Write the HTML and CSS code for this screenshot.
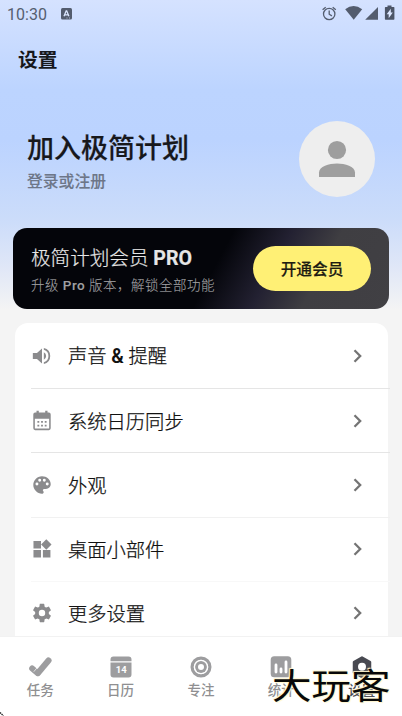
FILE: index.html
```html
<!DOCTYPE html>
<html lang="zh-CN">
<head>
<meta charset="utf-8">
<title>设置</title>
<link rel="stylesheet" href="styles.css">
</head>
<body>
<div class="screen">
  <header class="status">
    <span class="time">10:30</span>
    <svg class="ime" width="11" height="12" viewBox="0 0 11 12"><rect width="11" height="11.5" rx="1.5" fill="#535c6e"/><path d="M3 8.3 5.2 2.8h.5L7.9 8.3M3.8 6.8h3.3" fill="none" stroke="#dce7ff" stroke-width="1.3"/><path d="M5.5 10h1M8 10h1" stroke="#dce7ff" stroke-width=".7"/></svg>
    <svg class="signals" width="76" height="18" viewBox="0 0 76 18">
      <g fill="none" stroke="#555e70" stroke-width="1.3"><circle cx="8.2" cy="10" r="5.7"/><path d="M8.2 6.5v3.7l2.7 1.7M1.6 5.8 4.7 3.2M14.8 5.8 11.7 3.2"/></g>
      <path d="M24.2 5.2Q32.5-1 41.2 5.2L32.7 15.8z" fill="#535c6e"/>
      <path d="M57 3v12.8H44.2z" fill="#535c6e"/>
      <path d="M66.500 1.400h4v1.500h2.200q.7 0 .7.7v11.500q0 .7-.7.7h-8.100q-.7 0-.7-.7V3.600q0-.7.7-.7h1.900z" fill="#4c5567"/><path d="M69.800 4.800v3.800h2L67.700 14.200v-4h-2z" fill="#dce7ff"/>
    </svg>
  </header>
  <h1 class="title">设置</h1>
  <section class="profile">
    <div>
      <div class="name">加入极简计划</div>
      <div class="login">登录或注册</div>
    </div>
    <svg class="avatar" width="76" height="76" viewBox="0 0 76 76"><circle cx="38" cy="38" r="38" fill="#eee"/><circle cx="38" cy="29" r="9.100" fill="#9e9e9e"/><path d="M20 56v-4.500C20 45.500 30 42.500 38 42.500s18 3 18 9V56z" fill="#9e9e9e"/></svg>
  </section>
  <section class="member">
    <div>
      <div class="plan">极简计划会员 <b>PRO</b></div>
      <div class="desc">升级 <span>Pro</span> 版本，解锁全部功能</div>
    </div>
    <button class="open">开通会员</button>
  </section>
  <main class="list">
    <div class="row"><svg class="icon" viewBox="0 0 24 24"><path d="M2 8.800v6.400h4.500l5.500 5V3.800l-5.500 5H2zm14.500 3.200A4.500 4.500 0 0 0 14 7.970v8.050A4.470 4.470 0 0 0 16.500 12zM14 3.230v2.060a7 7 0 0 1 0 13.420v2.060a9 9 0 0 0 0-17.540z"/></svg><span class="label">声音 <b>&amp;</b> 提醒</span><svg class="arrow" viewBox="0 0 10 14"><path d="M1.500 1.300 7.200 7 1.500 12.700"/></svg></div>
    <div class="row"><svg class="icon" viewBox="0 0 24 24"><path fill-rule="evenodd" d="M19.500 2.800H18V.8h-2.500v2h-7v-2H6v2H4.500a2 2 0 0 0-2 2V20a2 2 0 0 0 2 2h15a2 2 0 0 0 2-2V4.800a2 2 0 0 0-2-2zM19.800 20.300H4.200V9.500h15.600zM7 12h2v2H7zm4 0h2v2h-2zm4 0h2v2h-2zm-8 4h2v2H7zm4 0h2v2h-2zm4 0h2v2h-2z"/></svg><span class="label">系统日历同步</span><svg class="arrow" viewBox="0 0 10 14"><path d="M1.500 1.300 7.200 7 1.500 12.700"/></svg></div>
    <div class="row"><svg class="icon" viewBox="0 0 24 24"><path d="M12 2.500C6.500 2.500 2.500 7 2.500 12s4.500 9.500 9.500 9.500c1 0 1.800-.7 1.800-1.700 0-.5-.2-.9-.5-1.200-.9-1-.1-2.300 1-2.300h2c3 0 5.200-2.400 5.200-5.300 0-4.700-4.300-8.500-9.500-8.500zM6.500 12.500a1.600 1.600 0 1 1 0-3.200 1.600 1.600 0 0 1 0 3.200zm3-4a1.600 1.600 0 1 1 0-3.200 1.600 1.600 0 0 1 0 3.200zm5 0a1.600 1.600 0 1 1 0-3.200 1.600 1.600 0 0 1 0 3.200zm3.200 4a1.600 1.600 0 1 1 0-3.200 1.600 1.600 0 0 1 0 3.200z"/></svg><span class="label">外观</span><svg class="arrow" viewBox="0 0 10 14"><path d="M1.500 1.300 7.200 7 1.500 12.700"/></svg></div>
    <div class="row"><svg class="icon" viewBox="0 0 24 24"><path d="M2.700 3.200h8.200v8.200H2.700zM2.700 13.200h8.200v8.200H2.700zM13 13.200h8.200v8.200H13zM16.700 1.400l5.700 5.700-5.700 5.700-5.700-5.700z"/></svg><span class="label">桌面小部件</span><svg class="arrow" viewBox="0 0 10 14"><path d="M1.500 1.300 7.200 7 1.500 12.700"/></svg></div>
    <div class="row"><svg class="icon" viewBox="0 0 24 24"><path d="M19.430 12.980c.04-.32.070-.64.070-.98s-.03-.66-.07-.98l2.110-1.650c.19-.15.240-.42.120-.64l-2-3.460c-.12-.22-.39-.3-.61-.22l-2.490 1c-.52-.4-1.080-.73-1.690-.98l-.38-2.650A.488.488 0 0 0 14 2h-4c-.25 0-.46.180-.49.420l-.38 2.650c-.61.250-1.170.59-1.690.98l-2.490-1c-.23-.09-.49 0-.61.220l-2 3.460c-.13.220-.07.490.12.640l2.110 1.650c-.04.320-.07.650-.07.980s.03.660.07.980l-2.110 1.650c-.19.150-.24.420-.12.640l2 3.460c.12.220.39.300.61.220l2.490-1c.52.400 1.080.730 1.690.980l.38 2.650c.03.240.24.420.49.420h4c.25 0 .46-.18.49-.42l.38-2.650c.61-.25 1.170-.59 1.690-.98l2.490 1c.23.090.49 0 .61-.22l2-3.460c.12-.22.070-.49-.12-.64zM12 15.500a3.500 3.500 0 1 1 0-7 3.500 3.500 0 0 1 0 7z"/></svg><span class="label">更多设置</span><svg class="arrow" viewBox="0 0 10 14"><path d="M1.500 1.300 7.200 7 1.500 12.700"/></svg></div>
  </main>
  <nav class="tabs">
    <div class="tab"><svg width="24" height="22" viewBox="0 0 24 22"><path d="M10 17 20.500 4.500" stroke="#9d9d9f" stroke-width="6" stroke-linecap="round"/><path d="M4.200 12.500 9.500 17" stroke="#9d9d9f" stroke-width="6" stroke-linecap="round"/><path d="M5.800 15.700 9.700 11" stroke="#fff" stroke-width=".7"/></svg><span>任务</span></div>
    <div class="tab"><svg width="24" height="22" viewBox="0 0 24 22"><path d="M1.500 5.300V3.500Q1.500.5 4.500.5h15q3 0 3 3v1.800zM1.500 6.600h21v11.900q0 3-3 3h-15q-3 0-3-3z" fill="#9d9d9f"/><text x="12.200" y="17" text-anchor="middle" class="date">14</text></svg><span>日历</span></div>
    <div class="tab"><svg width="24" height="22" viewBox="0 0 24 22"><circle cx="12" cy="11" r="8.900" fill="none" stroke="#9d9d9f" stroke-width="3.200"/><circle cx="12" cy="11" r="5.900" fill="#9d9d9f"/><circle cx="12" cy="11" r="6.700" fill="none" stroke="#fff" stroke-width=".7"/><circle cx="12" cy="11" r="3" fill="#fff"/></svg><span>专注</span></div>
    <div class="tab"><svg width="24" height="22" viewBox="0 0 24 22"><rect x="1.700" y=".3" width="20.600" height="21" rx="3.500" fill="#9d9d9f"/><path d="M7 9v7M12 13v3M17 6v10" stroke="#fff" stroke-width="2.800" stroke-linecap="round"/></svg><span>统计</span></div>
    <div class="tab current"><svg width="24" height="22" viewBox="0 0 24 22"><path d="M12 1.500 20 6v10.500L12 21 4 16.500V6z" fill="#484951" stroke="#484951" stroke-width="2.500" stroke-linejoin="round"/><circle cx="12" cy="10.800" r="4" fill="#fff"/></svg><span>设置</span></div>
  </nav>
  <svg class="corner" width="5" height="5" viewBox="0 0 5 5"><path d="M0 1.500 3.500 5" stroke="#222" stroke-width="1.300" stroke-dasharray="1.500 .7"/></svg>
  <div class="watermark">大玩客</div>
</div>
</body>
</html>
```

FILE: styles.css
```css
* { box-sizing: border-box; }
body { margin: 0; }
.screen {
  position: relative;
  display: flex;
  flex-direction: column;
  width: 402px;
  height: 716px;
  overflow: hidden;
  background: linear-gradient(#d5e2ff 0, #bcd4ff 90px, #bbd3ff 140px, #cbdcfa 218px, #e0e7f7 268px, #f4f4f4 310px);
  font-family: Roboto, "Noto Sans CJK SC", sans-serif;
  color: #17181c;
}
.status { display: flex; align-items: center; height: 28px; padding: 0 5px 0 7px; flex: none; }
.time { font-size: 16px; letter-spacing: .05px; color: #555e70; width: 54px; }
.signals { margin-left: auto; margin-top: -2px; }
.title { margin: 18px 0 0 18px; height: 30px; font-size: 19.800px; line-height: 30px; font-weight: 700; }
.profile { display: flex; justify-content: space-between; height: 76px; margin: 45px 27px 0; }
.name { margin-top: 9px; font-size: 27px; line-height: 38px; font-weight: 500; -webkit-text-stroke: .2px; }
.login { margin-top: 2px; font-size: 15.800px; line-height: 24px; font-weight: 500; color: #6d7688; -webkit-text-stroke: .1px; }
.member {
  display: flex;
  align-items: center;
  justify-content: space-between;
  flex: none;
  height: 81px;
  margin: 31px 13px 0;
  padding: 0 18px;
  border-radius: 14px;
  background: linear-gradient(118deg, #04050a 0, #04050a 53%, #232132 67%, #3f3e42 79%, #414044 100%);
}
.plan { margin-top: 3px; font-size: 19.600px; line-height: 29px; font-weight: 300; color: #e6e6e6; white-space: nowrap; -webkit-text-stroke: .2px; }
.plan b { font-weight: 700; }
.desc { margin-top: 1px; font-size: 13.500px; line-height: 22px; letter-spacing: .5px; font-weight: 300; color: #a0a0a2; white-space: nowrap; -webkit-text-stroke: .1px; }
.desc span { font-weight: 500; }
.open { width: 118px; height: 45px; padding: 2px 0 0; border: 0; border-radius: 23px; background: #fff075; color: #1d1c12; font: 500 15.700px/43px Roboto, "Noto Sans CJK SC", sans-serif; -webkit-text-stroke: .2px; }
.list { flex: none; width: 373px; height: 313px; margin: 14px 0 0 15px; border-radius: 13px 13px 0 0; background: #fff; }
.row { display: flex; align-items: center; height: 64.300px; margin-left: 16px; width: 359px; border-bottom: 1px solid #e5e5e5; }
.row:first-child { height: 66px; }
.row:nth-child(3) { border-color: #f1f1f1; }
.row:nth-child(4) { border-color: #f8f8f8; }
.row:last-child { border: 0; padding-bottom: 2px; }
.icon { width: 22px; height: 22px; margin: 0; fill: #8b8b8d; }
.label { flex: 1; margin: 4px 0 0 15px; font-size: 19.300px; line-height: 28px; font-weight: 300; color: #111; -webkit-text-stroke: .25px; }
.row:first-child .label { margin-top: 2px; }
.label b { font-weight: 600; -webkit-text-stroke: 0; }
.arrow { width: 10px; height: 14px; margin-right: 27px; fill: none; stroke: #747474; stroke-width: 2.300; }
.tabs { position: relative; display: flex; flex: none; height: 80px; border-top: 1px solid #f2f2f2; background: #fff; }
.tab { display: flex; flex-direction: column; align-items: center; width: 20%; padding-top: 19px; font-size: 13.500px; line-height: 20px; font-weight: 500; color: #8f8f91; }
.tab span { margin-top: 2px; }
.current { color: #484951; }
.date { font: 700 9.500px Roboto, sans-serif; fill: #fff; }
.corner { position: absolute; left: 0; bottom: 0; }
.watermark { position: absolute; left: 272px; top: 660px; font: 400 39.500px/48px "Noto Sans CJK SC", sans-serif; color: #080808; text-shadow: 0 0 1px #fff6cf, 1px 1px 1px #fff6cf, -1px -1px 1px #fff6cf; white-space: nowrap; transform: scaleY(.9); }
```
